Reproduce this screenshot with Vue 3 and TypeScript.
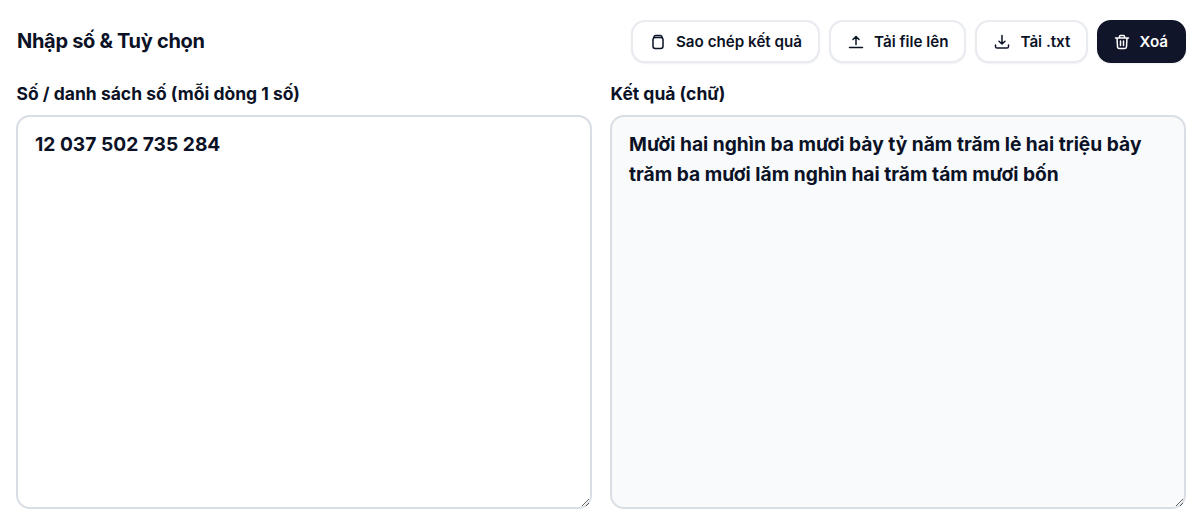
<script setup lang="ts">
const input = '12 037 502 735 284'
const output = 'Mười hai nghìn ba mươi bảy tỷ năm trăm lẻ hai triệu bảy trăm ba mươi lăm nghìn hai trăm tám mươi bốn'
</script>

<template>
  <div class="page">
    <header class="top">
      <h2 class="title">Nhập số &amp; Tuỳ chọn</h2>
      <div class="actions">
        <button class="btn">
          <svg viewBox="0 0 16 16" class="ico"><rect x="3" y="3.6" width="10" height="10.9" rx="2.2" /><path d="M4 3.6V3.2a1.7 1.7 0 0 1 1.7-1.7h4.6A1.7 1.7 0 0 1 12 3.2v.4" /></svg>
          Sao chép kết quả
        </button>
        <button class="btn">
          <svg viewBox="0 0 16 16" class="ico"><path d="M8 10.5V2.5M5 5.5l3-3 3 3M1.5 13.5h13" /></svg>
          Tải file lên
        </button>
        <button class="btn">
          <svg viewBox="0 0 16 16" class="ico"><path d="M8 1.5v8.5M5 7.2 8 10l3-2.8M1.5 11v1.4a1.6 1.6 0 0 0 1.6 1.6h9.8a1.6 1.6 0 0 0 1.6-1.6V11" /></svg>
          Tải .txt
        </button>
        <button class="btn dark">
          <svg viewBox="0 0 16 16" class="ico"><path d="M1.5 4h13M5.5 4V2.5a1 1 0 0 1 1-1h3a1 1 0 0 1 1 1V4M3 4l.5 8.8a1.7 1.7 0 0 0 1.7 1.7h5.6a1.7 1.7 0 0 0 1.7-1.7L13 4M6.5 7v4.5M9.5 7v4.5" /></svg>
          Xoá
        </button>
      </div>
    </header>
    <div class="cols">
      <label class="col">
        <span class="lbl">Số / danh sách số (mỗi dòng 1 số)</span>
        <textarea class="box" :value="input"></textarea>
      </label>
      <label class="col">
        <span class="lbl">Kết quả (chữ)</span>
        <textarea class="box out" readonly :value="output"></textarea>
      </label>
    </div>
  </div>
</template>

<style scoped>
.page {
  box-sizing: border-box;
  width: 1200px;
  height: 529px;
  padding: 20px 14px 20px 16px;
  font-family: Inter, "Liberation Sans", sans-serif;
  color: #0b1226;
  background: #fff;
  overflow: hidden;
}
.top {
  display: flex;
  align-items: center;
  justify-content: space-between;
  height: 43px;
}
.title {
  margin: -2px 0 0 1px;
  font-size: 20px;
  font-weight: 700;
  letter-spacing: -0.3px;
}
.actions {
  display: flex;
  gap: 9px;
}
.btn {
  display: flex;
  align-items: center;
  gap: 10px;
  box-sizing: border-box;
  height: 43px;
  padding: 0 16px 0 17px;
  border: 2px solid #e8ebf0;
  border-radius: 14px;
  background: #fff;
  color: #0b1226;
  font: 600 15.2px Inter, "Liberation Sans", sans-serif;
  box-shadow: 0 1px 2px rgba(15, 23, 42, 0.06);
}
.btn.dark {
  gap: 9px;
  padding: 0 16px 0 15px;
  background: #10152a;
  border-color: #10152a;
  color: #fff;
}
.ico {
  width: 16px;
  height: 16px;
  fill: none;
  stroke: currentColor;
  stroke-width: 1.5;
  stroke-linecap: round;
  stroke-linejoin: round;
}
.cols {
  display: grid;
  grid-template-columns: 576px 576px;
  gap: 18px;
  margin-top: 20px;
}
.col {
  display: flex;
  flex-direction: column;
  gap: 10px;
}
.lbl {
  margin-left: 0.5px;
  font-size: 17.5px;
  line-height: 22px;
  font-weight: 700;
}
.box {
  box-sizing: border-box;
  width: 576px;
  height: 394px;
  padding: 12px 17px;
  border: 2px solid #d9dee5;
  border-radius: 14px;
  background: #fff;
  color: #0b1226;
  font: 700 19.2px/30px Inter, "Liberation Sans", sans-serif;
  outline: none;
}
.box.out {
  background: #f8fafc;
}
</style>
